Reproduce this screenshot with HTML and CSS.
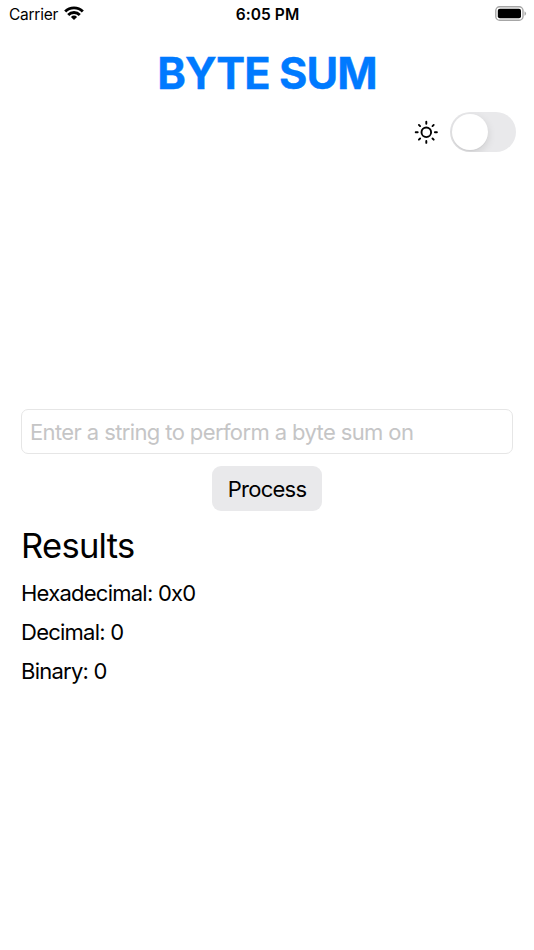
FILE: index.html
```html
<!DOCTYPE html>
<html lang="en">
<head>
<meta charset="utf-8">
<title>Byte Sum</title>
<link rel="stylesheet" href="styles.css">
</head>
<body>
<header class="status">
  <div class="status-left">
    <span class="carrier">Carrier</span>
    <svg class="wifi" viewBox="0 0 20 14" width="20" height="14" fill="none" stroke="#000" stroke-width="2.9">
      <path d="M1.2 5.5a12.4 12.4 0 0 1 17.6 0M4.2 8.9a8.2 8.2 0 0 1 11.6 0"/>
      <path d="M10 14l-3.1-3.1a4.4 4.4 0 0 1 6.2 0z" fill="#000" stroke="none"/>
    </svg>
  </div>
  <span class="time">6:05 PM</span>
  <svg class="battery" viewBox="0 0 32 15" width="32" height="15">
    <rect x=".8" y=".8" width="27.2" height="13.4" rx="3.8" fill="none" stroke="#a6a6a6" stroke-width="1.4"/>
    <rect x="2.8" y="2.8" width="23.2" height="9.4" rx="2" fill="#000"/>
    <path d="M29.5 5.2a2.5 2.5 0 0 1 0 4.6z" fill="#a6a6a6"/>
  </svg>
</header>
<main class="screen">
  <h1 class="title">BYTE SUM</h1>
  <div class="theme">
    <svg class="sun" viewBox="0 0 24 24" width="24" height="24" fill="none" stroke="#000" stroke-width="1.9" stroke-linecap="round">
      <circle cx="12.3" cy="12.3" r="4.8"/>
      <path d="M12.3 1.7v2M12.3 20.9v2M1.7 12.3h2M20.9 12.3h2M4.9 4.9l1.2 1.2M18.5 18.5l1.2 1.2M19.7 4.9l-1.2 1.2M6.1 18.5l-1.2 1.2"/>
    </svg>
    <div class="switch" role="switch" aria-checked="false"><span class="knob"></span></div>
  </div>
  <div class="field"><span class="placeholder">Enter a string to perform a byte sum on</span></div>
  <button class="process"><span class="label">Process</span></button>
  <section class="results">
    <h2 class="heading"><span>Results</span></h2>
    <p class="row"><span class="hex">Hexadecimal: 0x0</span></p>
    <p class="row"><span class="dec">Decimal: 0</span></p>
    <p class="row"><span class="bin">Binary: 0</span></p>
  </section>
</main>
</body>
</html>
```
FILE: styles.css
```css
* { box-sizing: border-box; }
body { margin: 0; height: 950px; overflow: hidden; background: #fff; color: #000; font-family: Inter, "Liberation Sans", sans-serif; }
.status { height: 28px; padding: 0 8px 0 9px; display: grid; grid-template-columns: 1fr auto 1fr; align-items: center; }
.status-left { display: flex; align-items: center; gap: 6px; height: 28px; }
.carrier { font-size: 15.5px; letter-spacing: -.25px; }
.wifi { margin-top: -2px; }
.time { font-size: 15.5px; font-weight: 600; letter-spacing: .1px; }
.battery { justify-self: end; margin: -1px -1px 0 0; }
.screen { display: flex; flex-direction: column; padding: 0 21px; }
.title { margin: 19px 0 0; height: 52px; line-height: 52px; font-size: 43.3px; font-weight: 700; letter-spacing: -.9px; color: #007aff; -webkit-text-stroke: .4px #007aff; align-self: center; white-space: nowrap; }
.theme { display: flex; align-self: flex-end; align-items: center; gap: 12px; margin: 13px -3px 0 0; height: 40px; }
.switch { width: 66px; height: 40px; padding: 2px; border-radius: 20px; background: #e9e9eb; overflow: hidden; }
.knob { display: block; width: 36px; height: 36px; border-radius: 50%; background: #fff; box-shadow: 0 3px 8px rgba(0,0,0,.12), 0 1px 1px rgba(0,0,0,.04); }
.field { margin-top: 257px; height: 45px; width: 492px; border: 1px solid #e6e6e6; border-radius: 7px; padding: 0 8px; display: flex; align-items: center; color: #c5c5c6; font-size: 22px; letter-spacing: -.61px; white-space: nowrap; }
.process { margin: 12px 0 0; align-self: center; width: 110px; height: 45px; padding: 0; border: 0; border-radius: 9px; background: #e9e9eb; color: #000; font: 22px Inter, "Liberation Sans", sans-serif; letter-spacing: -.75px; }
.heading { margin: 13px 0 12px; height: 43px; line-height: 43px; font-size: 34.5px; font-weight: 400; letter-spacing: -.7px; }
.row { margin: 0 0 10px; height: 29px; line-height: 29px; font-size: 22px; letter-spacing: -.75px; }
```
